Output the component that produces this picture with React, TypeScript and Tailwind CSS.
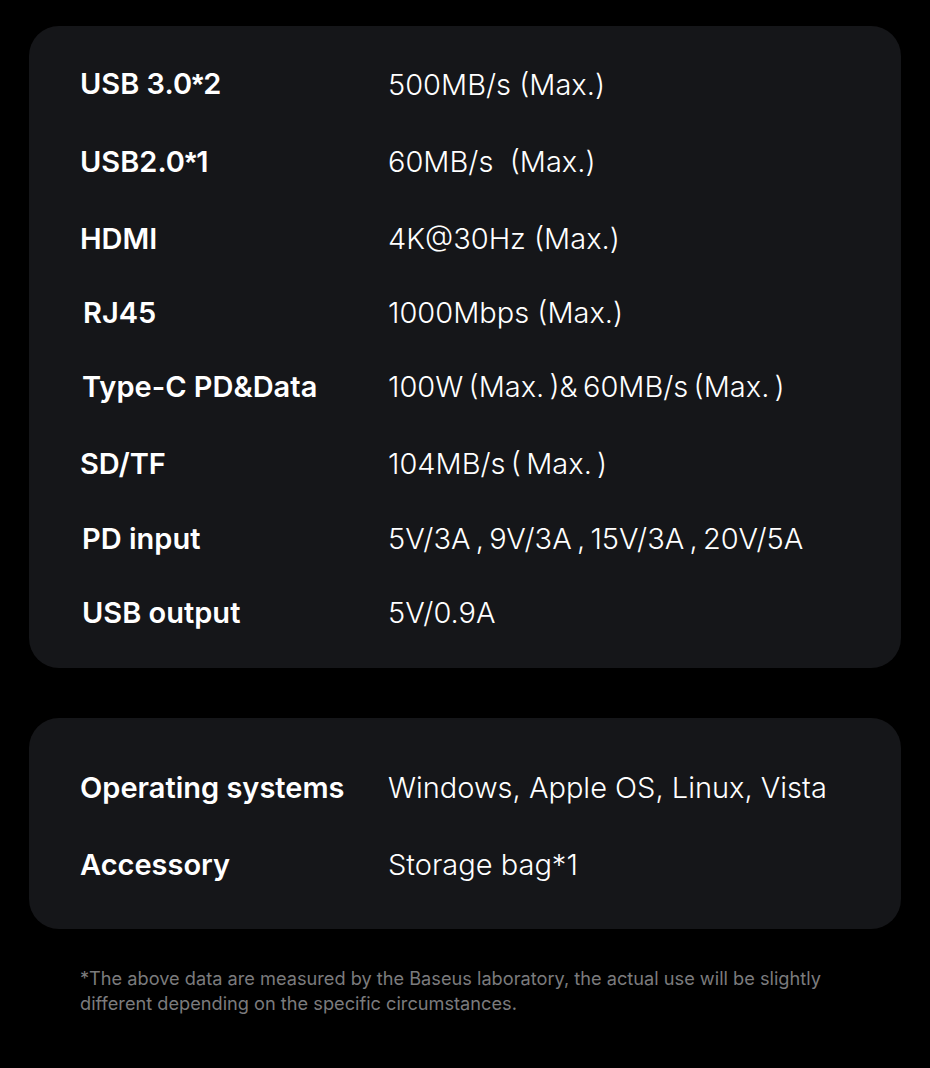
const specs = [
  { label: 'USB 3.0*2', value: '500MB/s (Max.)', h: 'h-[77px]', pl: 'pl-0' },
  { label: 'USB2.0*1', value: '60MB/s\u00a0 (Max.)', h: 'h-[78px]', pl: 'pl-0' },
  { label: 'HDMI', value: '4K@30Hz (Max.)', h: 'h-[76px]', pl: 'pl-0' },
  { label: 'RJ45', value: '1000Mbps (Max.)', h: 'h-[72px]', pl: 'pl-[3px]' },
  { label: 'Type-C PD&Data', value: '100W\u2009(Max.\u2009)&\u200960MB/s\u2009(Max.\u2009)', h: 'h-[76px]', pl: 'pl-[2px]' },
  { label: 'SD/TF', value: '104MB/s\u2009(\u2009Max.\u2009)', h: 'h-[77px]', pl: 'pl-0' },
  { label: 'PD input', value: '5V/3A\u2009,\u20099V/3A\u2009,\u200915V/3A\u2009,\u200920V/5A', h: 'h-[73px]', pl: 'pl-[2px]' },
  { label: 'USB output', value: '5V/0.9A', h: 'h-[75px]', pl: 'pl-[2px]' },
]

const extras = [
  { label: 'Operating systems', value: 'Windows, Apple OS, Linux, Vista', h: 'h-[77px]' },
  { label: 'Accessory', value: 'Storage bag*1', h: 'h-[77px]' },
]

// Inter's asterisk sits low; the reference uses a raised one
function Label({ text }: { text: string }) {
  const parts = text.split('*')
  return (
    <>
      {parts.map((p, i) => (
        <span key={i}>
          {i > 0 && <span className="font-['Liberation_Sans']">*</span>}
          {p}
        </span>
      ))}
    </>
  )
}

function Row({ label, value, h, pl = 'pl-0' }: { label: string; value: string; h: string; pl?: string }) {
  return (
    <div className={`flex items-center ${h}`}>
      <div className={`w-[308px] shrink-0 text-[29px] font-semibold text-white ${pl}`}>
        <Label text={label} />
      </div>
      <div className="text-[29px] font-light text-white">{value}</div>
    </div>
  )
}

export default function App() {
  return (
    <div
      className="min-h-screen bg-black px-[29px] pt-[26px] pb-10"
      style={{ fontFamily: 'Inter, "Noto Sans CJK SC", sans-serif' }}
    >
      {/* Port specs */}
      <div className="rounded-[30px] bg-[#151619] pl-[51px] pt-[20px] h-[642px]">
        {specs.map((s) => (
          <Row key={s.label} {...s} />
        ))}
      </div>

      {/* System + accessory */}
      <div className="mt-[50px] rounded-[30px] bg-[#151619] pl-[51px] pt-[31px] h-[211px]">
        {extras.map((s) => (
          <Row key={s.label} {...s} />
        ))}
      </div>

      <p className="mt-[37px] pl-[51px] text-[18.2px] leading-[25px] text-[#7b7b7d]">
        *The above data are measured by the Baseus laboratory, the actual use will be slightly
        <br />
        different depending on the specific circumstances.
      </p>
    </div>
  )
}
